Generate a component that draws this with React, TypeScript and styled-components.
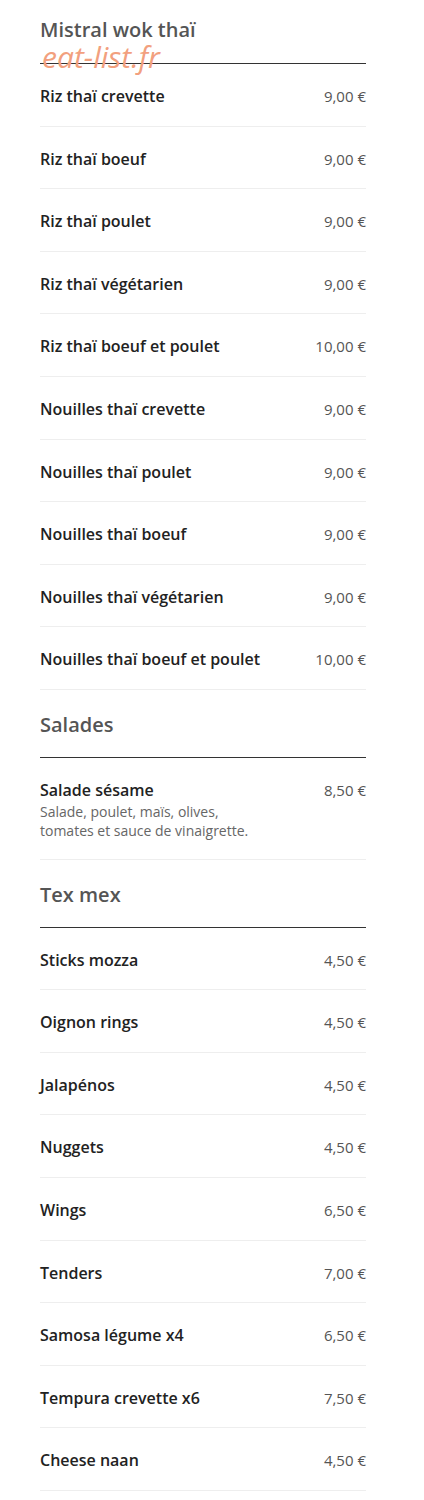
import styled, { createGlobalStyle } from "styled-components";

const GlobalStyle = createGlobalStyle`
  body {
    margin: 0;
    background: #fff;
    font-family: "Open Sans", "Noto Sans", sans-serif;
  }
`;

const Page = styled.div`
  width: 326px;
  margin: 0 0 0 40px;
`;

const Header = styled.div`
  position: relative;
  padding: 17px 0 20px;
  border-bottom: 1px solid #333;
`;

const SectionTitle = styled.h2`
  margin: 0;
  font-size: 20px;
  line-height: 26px;
  font-weight: 600;
  color: #555;
`;

const Section = styled.div`
  padding: 22px 0 19px;
  border-bottom: 1px solid #333;
`;

const Watermark = styled.span`
  position: absolute;
  left: 2px;
  top: 39px;
  font-size: 30px;
  line-height: 36px;
  font-style: italic;
  color: #f2a07e;
  pointer-events: none;
`;

const Row = styled.div`
  display: flex;
  justify-content: space-between;
  align-items: flex-start;
  padding: 20px 0 17.6px;
  border-bottom: 1px solid #eee;
`;

const Info = styled.div``;

const Name = styled.div`
  font-size: 16px;
  line-height: 24px;
  font-weight: 600;
  color: #222;
`;

const Desc = styled.div`
  font-size: 14px;
  line-height: 19.5px;
  color: #666;
`;

const Price = styled.div`
  font-size: 15px;
  line-height: 24px;
  color: #555;
  white-space: nowrap;
`;

type Item = { name: string; price: string; desc?: string[] };

const wok: Item[] = [
  { name: "Riz thaï crevette", price: "9,00 €" },
  { name: "Riz thaï boeuf", price: "9,00 €" },
  { name: "Riz thaï poulet", price: "9,00 €" },
  { name: "Riz thaï végétarien", price: "9,00 €" },
  { name: "Riz thaï boeuf et poulet", price: "10,00 €" },
  { name: "Nouilles thaï crevette", price: "9,00 €" },
  { name: "Nouilles thaï poulet", price: "9,00 €" },
  { name: "Nouilles thaï boeuf", price: "9,00 €" },
  { name: "Nouilles thaï végétarien", price: "9,00 €" },
  { name: "Nouilles thaï boeuf et poulet", price: "10,00 €" },
];

const salades: Item[] = [
  {
    name: "Salade sésame",
    price: "8,50 €",
    desc: ["Salade, poulet, maïs, olives,", "tomates et sauce de vinaigrette."],
  },
];

const texmex: Item[] = [
  { name: "Sticks mozza", price: "4,50 €" },
  { name: "Oignon rings", price: "4,50 €" },
  { name: "Jalapénos", price: "4,50 €" },
  { name: "Nuggets", price: "4,50 €" },
  { name: "Wings", price: "6,50 €" },
  { name: "Tenders", price: "7,00 €" },
  { name: "Samosa légume x4", price: "6,50 €" },
  { name: "Tempura crevette x6", price: "7,50 €" },
  { name: "Cheese naan", price: "4,50 €" },
];

function Items({ items }: { items: Item[] }) {
  return (
    <>
      {items.map((it) => (
        <Row key={it.name}>
          <Info>
            <Name>{it.name}</Name>
            {it.desc && it.desc.map((d) => <Desc key={d}>{d}</Desc>)}
          </Info>
          <Price>{it.price}</Price>
        </Row>
      ))}
    </>
  );
}

export default function App() {
  return (
    <Page>
      <GlobalStyle />
      <Header>
        <SectionTitle>Mistral wok thaï</SectionTitle>
        <Watermark>eat-list.fr</Watermark>
      </Header>
      <Items items={wok} />
      <Section>
        <SectionTitle>Salades</SectionTitle>
      </Section>
      <Items items={salades} />
      <Section>
        <SectionTitle>Tex mex</SectionTitle>
      </Section>
      <Items items={texmex} />
    </Page>
  );
}
